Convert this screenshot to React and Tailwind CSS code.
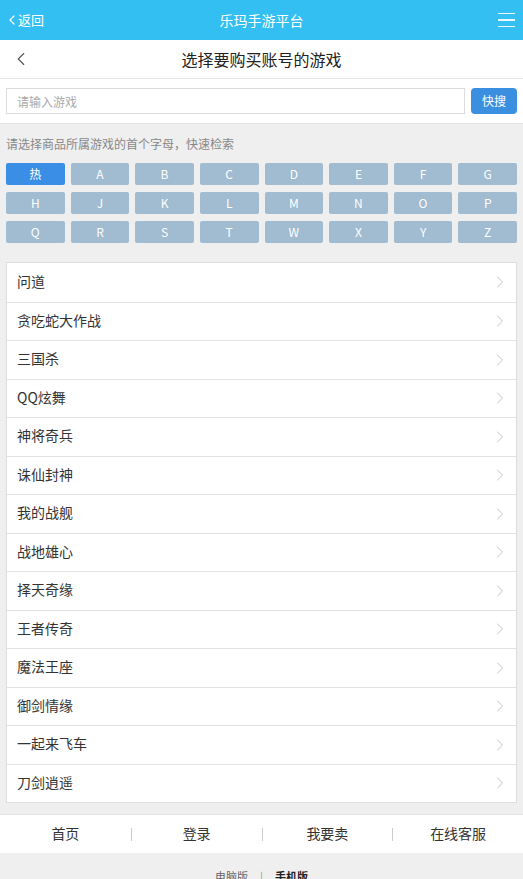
import React from "react";
import { ChevronLeft, ChevronRight } from "lucide-react";

const letters = [
  "热", "A", "B", "C", "D", "E", "F", "G",
  "H", "J", "K", "L", "M", "N", "O", "P",
  "Q", "R", "S", "T", "W", "X", "Y", "Z",
];

const games = [
  "问道",
  "贪吃蛇大作战",
  "三国杀",
  "QQ炫舞",
  "神将奇兵",
  "诛仙封神",
  "我的战舰",
  "战地雄心",
  "择天奇缘",
  "王者传奇",
  "魔法王座",
  "御剑情缘",
  "一起来飞车",
  "刀剑逍遥",
];

const navs = ["首页", "登录", "我要卖", "在线客服"];

const App = () => {
  return (
    <div
      className="min-h-screen bg-[#efefef] text-[#333]"
      style={{ fontFamily: '"Noto Sans CJK SC", "Noto Sans", sans-serif' }}
    >
      {/* Top bar */}
      <header className="h-10 bg-[#33bff1] text-white flex items-center justify-between px-1">
        <div className="flex items-center w-[60px] text-[13px]">
          <ChevronLeft size={16} strokeWidth={1.8} className="-mr-0.5" />
          <span>返回</span>
        </div>
        <h1 className="text-[14px]">乐玛手游平台</h1>
        <div className="w-[60px] flex justify-end pr-1">
          <div className="flex flex-col gap-[5px] w-[17px]">
            <span className="h-[1.5px] bg-white/90"></span>
            <span className="h-[1.5px] bg-white/90"></span>
            <span className="h-[1.5px] bg-white/90"></span>
          </div>
        </div>
      </header>

      {/* Title row */}
      <div className="h-[39px] bg-white border-b border-[#e6e6e6] flex items-center relative">
        <ChevronLeft
          size={22}
          strokeWidth={1.2}
          className="absolute left-2.5 text-[#555]"
        />
        <h2 className="flex-1 text-center text-[16px] text-[#222]">
          选择要购买账号的游戏
        </h2>
      </div>

      {/* Search */}
      <div className="bg-white flex items-center gap-1.5 px-1.5 h-[45px] border-b border-[#e3e3e3]">
        <input
          type="text"
          placeholder="请输入游戏"
          className="flex-1 h-[26px] border border-[#dcdcdc] px-2.5 text-[12px] placeholder-[#aaa] outline-none"
        />
        <button className="w-[46px] h-[26px] bg-[#3b8fe0] text-white text-[12px] rounded-sm">
          快搜
        </button>
      </div>

      {/* Letter filter */}
      <div className="px-1.5 pt-2">
        <p className="text-[12px] text-[#888] leading-[24px]">
          请选择商品所属游戏的首个字母，快速检索
        </p>
        <div className="grid grid-cols-8 gap-x-1.5 gap-y-[7px] mt-[7px]">
          {letters.map((l, i) => (
            <button
              key={l}
              className={`h-[22px] rounded-[2px] text-[12px] text-white ${
                i === 0 ? "bg-[#3a8ee6]" : "bg-[#a1bbd0]"
              }`}
            >
              {l}
            </button>
          ))}
        </div>
      </div>

      {/* Game list */}
      <ul className="mx-1.5 mt-[19px] bg-white border border-[#dedede]">
        {games.map((g, i) => (
          <li
            key={g}
            className={`h-[38.5px] flex items-center justify-between pl-2.5 pr-1.5 text-[14px] text-[#333] ${
              i > 0 ? "border-t border-[#e2e2e2]" : ""
            }`}
          >
            <span className="-translate-y-px">{g}</span>
            <ChevronRight size={20} strokeWidth={1.2} className="text-[#c4c4c4]" />
          </li>
        ))}
      </ul>

      {/* Footer nav */}
      <nav className="mt-[11px] h-[39px] bg-white border-t border-[#e3e3e3] flex items-center">
        {navs.map((n, i) => (
          <div key={n} className="flex-1 flex items-center">
            {i > 0 && <span className="w-px h-[13px] bg-[#ccc]"></span>}
            <span className="flex-1 text-center text-[14px] text-[#333] -translate-y-px">{n}</span>
          </div>
        ))}
      </nav>

      <div className="h-7 flex items-end justify-center gap-3 text-[11px]">
        <span className="text-[#666] leading-[14px] translate-y-[2px]">电脑版</span>
        <span className="text-[#999] leading-[14px] translate-y-[2px]">|</span>
        <span className="text-[#222] font-bold leading-[14px] translate-y-[2px]">手机版</span>
      </div>
    </div>
  );
};

export default App;
